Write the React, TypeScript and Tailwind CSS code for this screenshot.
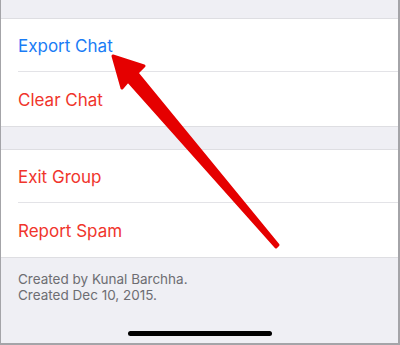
const font = { fontFamily: 'Inter, "Liberation Sans", sans-serif' };

const Row = ({ label, color, last }: { label: string; color: string; last?: boolean }) => (
  <div className="pl-[17px]">
    <div
      className={`pt-[3px] flex items-center text-[17px] ${color} ${last ? 'h-[54px]' : 'h-[53px] border-b border-[#e3e3e7]'}`}
    >
      {label}
    </div>
  </div>
);

export default function App() {
  return (
    <div
      className="relative w-[400px] h-[345px] overflow-hidden bg-[#efeff4] border-l border-r-2 border-b-2 border-[#a4a4a8] flex flex-col"
      style={font}
    >
      <div className="h-[18px]" />
      <div className="bg-white border-t border-b border-[#dedee2]">
        <Row label="Export Chat" color="text-[#1a7cf5]" />
        <Row label="Clear Chat" color="text-[#f0352c]" last />
      </div>
      <div className="h-[22px]" />
      <div className="bg-white border-t border-b border-[#dedee2]">
        <Row label="Exit Group" color="text-[#f0352c]" />
        <Row label="Report Spam" color="text-[#f0352c]" last />
      </div>
      <div className="pl-[17px] pt-[13px] text-[13.5px] leading-[16px] text-[#6d6d72]">
        <div>Created by Kunal Barchha.</div>
        <div>Created Dec 10, 2015.</div>
      </div>
      <div className="flex-1" />
      <div className="flex justify-center pb-[7px]">
        <div className="w-[144px] h-[5px] rounded-full bg-black" />
      </div>

      <svg className="absolute left-0 top-0" width="400" height="345" viewBox="0 0 400 345">
        <polygon
          points="112,56 143,66 136,73 277,245 275,247 127,81 121,88"
          fill="#e50000"
          stroke="#e50000"
          strokeWidth="3"
          strokeLinejoin="round"
        />
      </svg>
    </div>
  );
}
